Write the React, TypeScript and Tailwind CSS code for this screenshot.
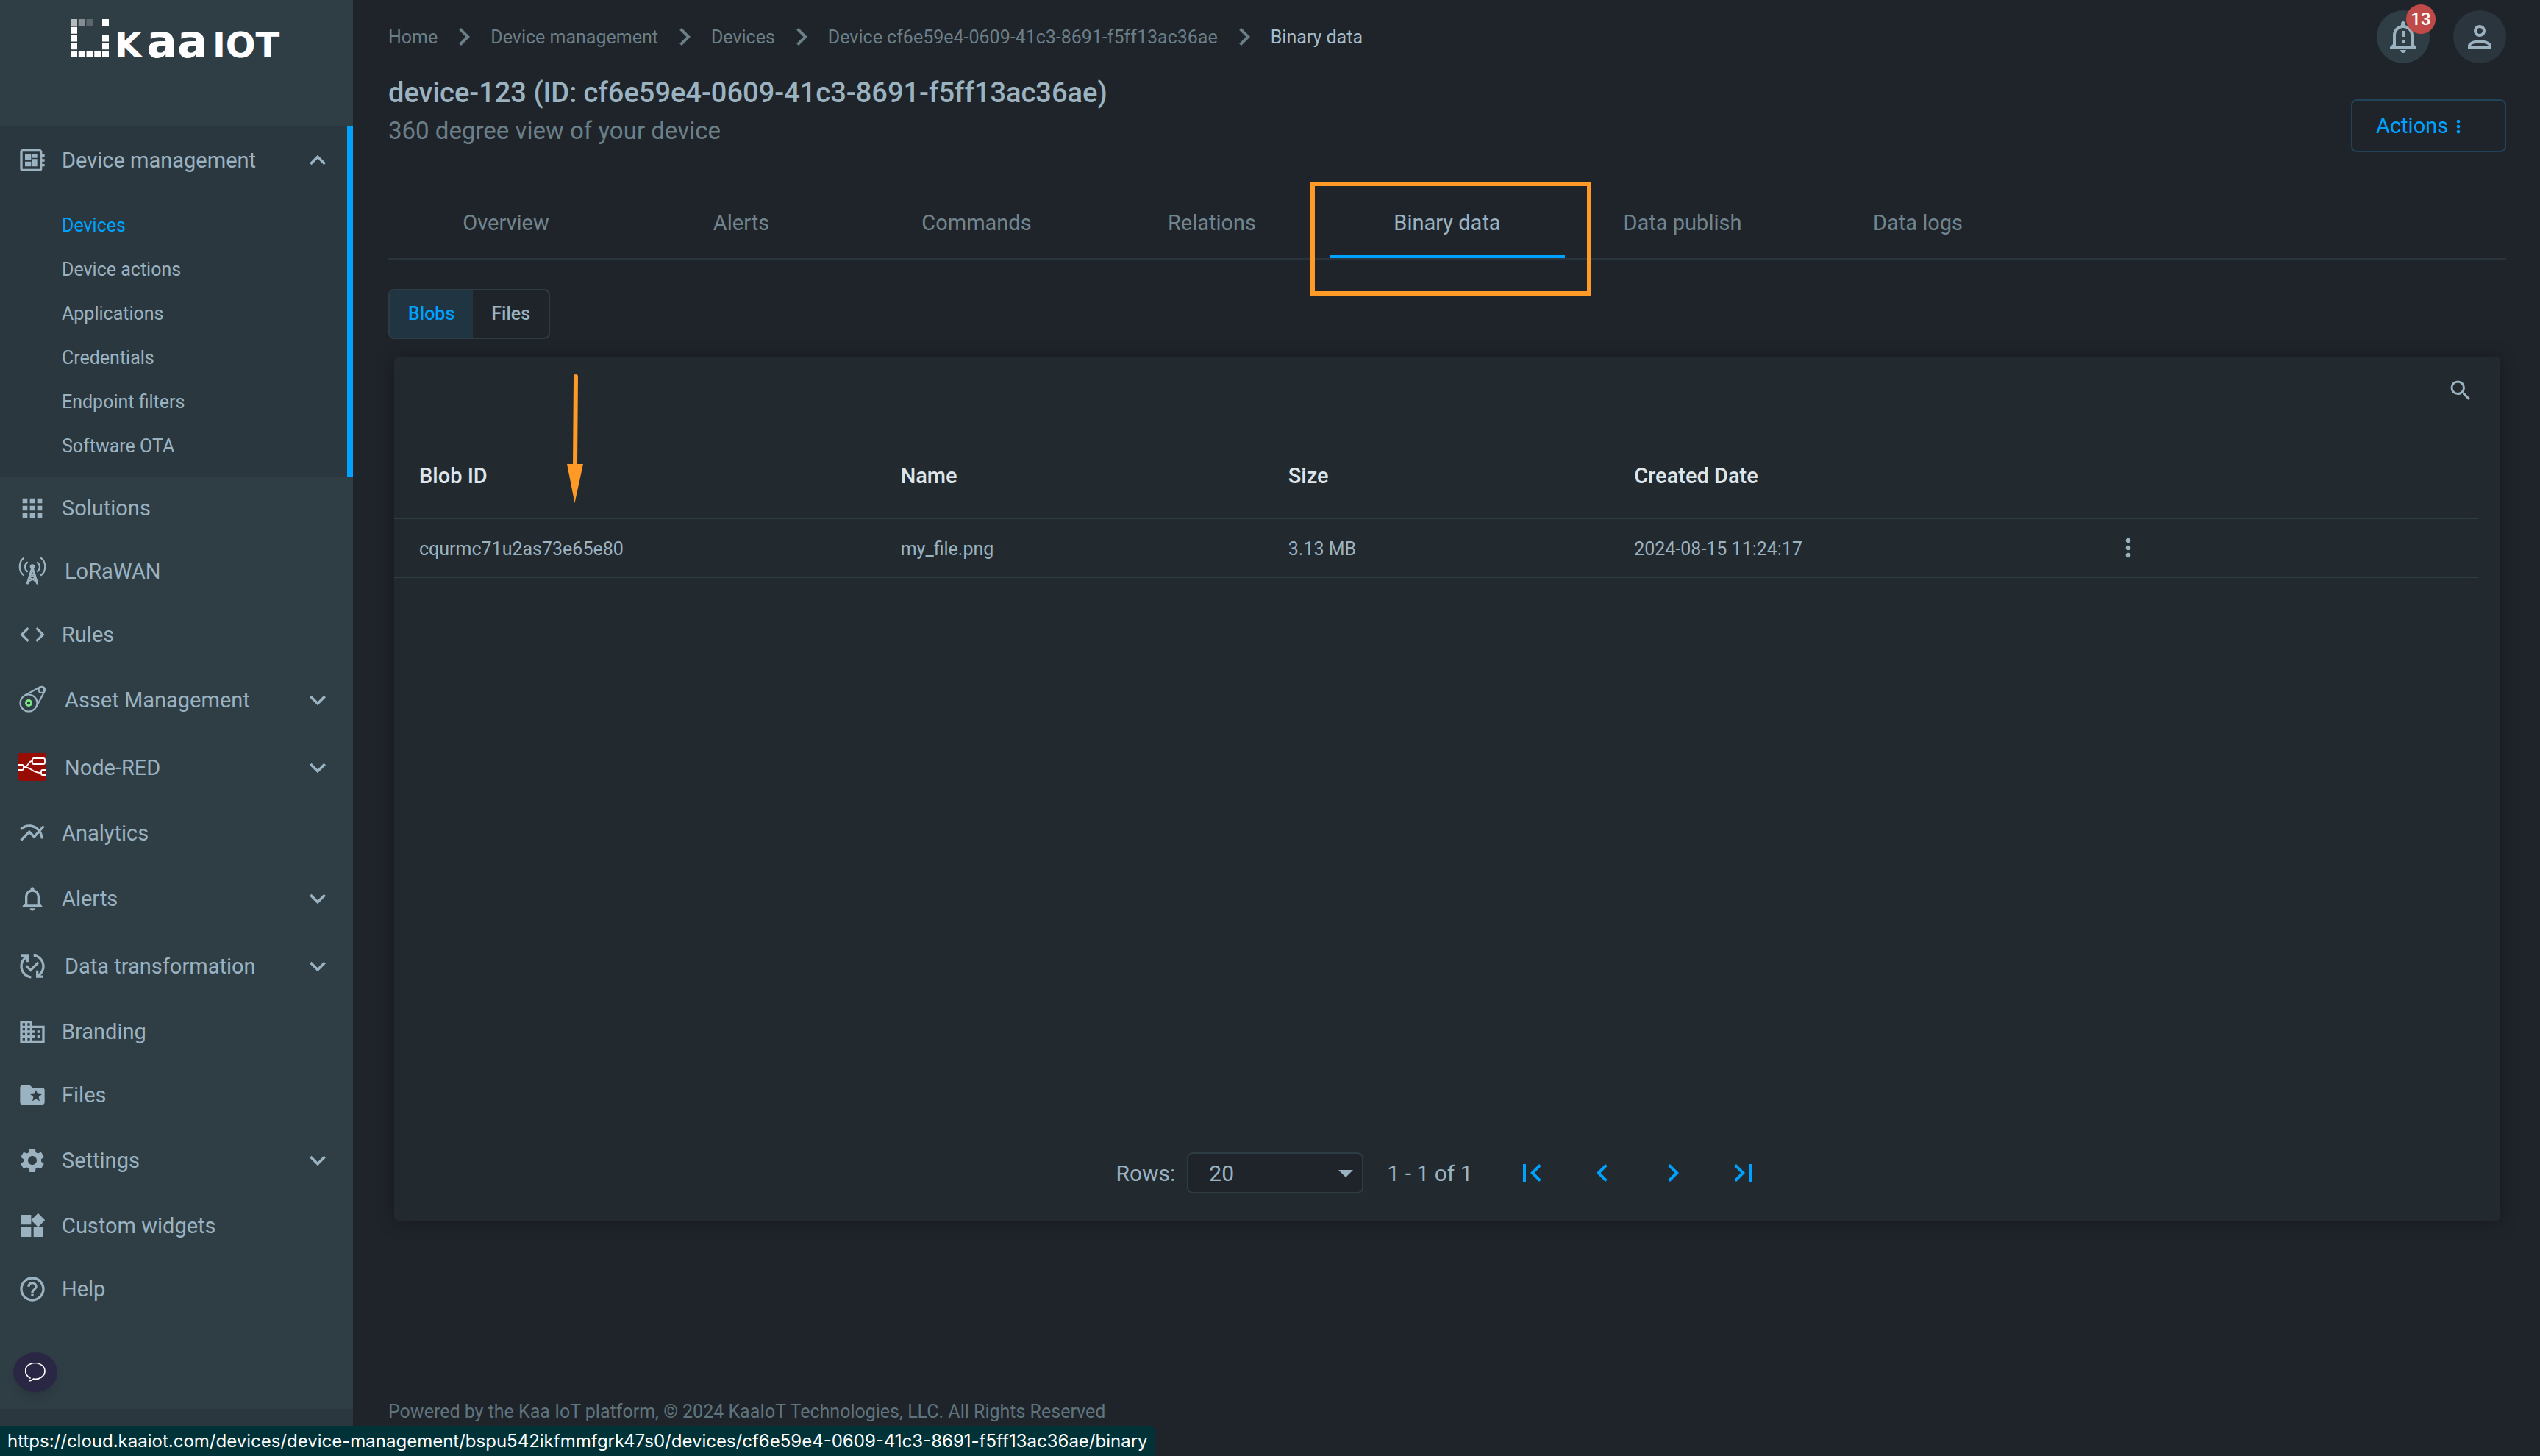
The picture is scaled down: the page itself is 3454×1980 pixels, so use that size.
import { useState } from 'react';
import type { ComponentType, ReactNode } from 'react';
import {
  MdApps,
  MdArrowDropDown,
  MdChevronLeft,
  MdChevronRight,
  MdCode,
  MdDomain,
  MdExpandLess,
  MdExpandMore,
  MdFirstPage,
  MdFolderSpecial,
  MdHelpOutline,
  MdLastPage,
  MdMoreVert,
  MdMultilineChart,
  MdNotificationsNone,
  MdOutlineDeveloperBoard,
  MdOutlineNotificationImportant,
  MdOutlinePerson,
  MdOutlinePublishedWithChanges,
  MdSearch,
  MdSettings,
  MdWidgets,
} from 'react-icons/md';

interface IconProps {
  className?: string;
}

interface NavEntry {
  label: string;
  icon: ComponentType<IconProps>;
  expandable?: boolean;
  custom?: boolean;
}

interface Blob {
  id: string;
  name: string;
  size: string;
  created: string;
}

function AntennaIcon({ className }: IconProps) {
  return (
    <svg viewBox="0 0 40 40" fill="none" stroke="currentColor" strokeWidth="2.2" strokeLinecap="round" className={className}>
      <path d="M8 2C1 7 1 20 8 25M32 2c7 5 7 18 0 23M13 8c-4 3-4 9 0 12M27 8c4 3 4 9 0 12" />
      <circle cx="20" cy="13.500" r="3.300" fill="currentColor" stroke="none" />
      <path d="M20 15l-6.500 21M20 15l6.500 21" strokeWidth="3.200" />
      <path d="M18 24l7 5M22 24l-7 5M15 34l9-6M25 34l-9-6" strokeWidth="1.800" />
    </svg>
  );
}

function BeltIcon({ className }: IconProps) {
  return (
    <svg viewBox="0 0 40 40" fill="none" stroke="currentColor" strokeWidth="2.2" className={className}>
      <circle cx="15" cy="24" r="11.500" />
      <path d="M9.500 13.800L30.300 2.300c4.500-1.800 8 1.500 6.300 5.800L25.300 29.500" />
      <circle cx="32.300" cy="6.200" r="3.800" />
      <circle cx="15" cy="24" r="3.600" stroke="#7be586" strokeWidth="2.800" />
    </svg>
  );
}

function NodeRedIcon({ className }: IconProps) {
  return (
    <svg viewBox="0 0 40 40" fill="none" className={className}>
      <rect x="1" y="0" width="38" height="38" rx="3" fill="#970d04" />
      <g stroke="#fff" strokeWidth="1.800">
        <rect x="20" y="7" width="17" height="8" rx="2" />
        <path d="M1 16h5q2 0 2 2v3q0 2-2 2H1" />
        <path d="M39 23h-5q-2 0-2 2v3q0 2 2 2h5" />
        <path d="M8 19c8 0 5-8 12-8M8 19c12 0 10 8 24 8" />
      </g>
    </svg>
  );
}

const mainNav: NavEntry[] = [
  { label: 'Solutions', icon: MdApps },
  { label: 'LoRaWAN', icon: AntennaIcon, custom: true },
  { label: 'Rules', icon: MdCode },
  { label: 'Asset Management', icon: BeltIcon, expandable: true, custom: true },
  { label: 'Node-RED', icon: NodeRedIcon, expandable: true, custom: true },
  { label: 'Analytics', icon: MdMultilineChart },
  { label: 'Alerts', icon: MdNotificationsNone, expandable: true },
  { label: 'Data transformation', icon: MdOutlinePublishedWithChanges, expandable: true, custom: true },
  { label: 'Branding', icon: MdDomain },
  { label: 'Files', icon: MdFolderSpecial },
  { label: 'Settings', icon: MdSettings, expandable: true },
  { label: 'Custom widgets', icon: MdWidgets },
  { label: 'Help', icon: MdHelpOutline },
];

const deviceNav = ['Devices', 'Device actions', 'Applications', 'Credentials', 'Endpoint filters', 'Software OTA'];

const crumbs = ['Home', 'Device management', 'Devices', 'Device cf6e59e4-0609-41c3-8691-f5ff13ac36ae'];

const tabs = ['Overview', 'Alerts', 'Commands', 'Relations', 'Binary data', 'Data publish', 'Data logs'];

const blobs: Blob[] = [
  { id: 'cqurmc71u2as73e65e80', name: 'my_file.png', size: '3.13 MB', created: '2024-08-15 11:24:17' },
];

function Logo() {
  const solid = [
    [4, 0], [0, 1], [0, 2], [4, 2], [0, 3], [4, 3], [0, 4], [1, 4], [2, 4], [3, 4], [4, 4],
  ];
  return (
    <a href="#" aria-label="KaaIoT" className="flex h-[172px] items-start pt-[26px] pl-24 text-white">
      <svg viewBox="0 0 52 52" className="size-[52px]" fill="currentColor">
        <rect x="0" y="0" width="9" height="9" opacity="0.65" />
        <rect x="10.750" y="0" width="9" height="9" opacity="0.42" />
        <rect x="21.500" y="0" width="9" height="9" opacity="0.22" />
        {solid.map(([col, row]) => (
          <rect key={`${col}-${row}`} x={col * 10.75} y={row * 10.75} width="9" height="9" />
        ))}
      </svg>
      <span className="ml-2 flex h-[52px] items-baseline gap-1.5 font-['DejaVu_Sans'] text-5xl font-bold">
        <span className="leading-[62px]">K</span>
        <span className="text-[62px] leading-[62px]">aa</span>
        <span className="leading-[62px]">IOT</span>
      </span>
    </a>
  );
}

function NavItem({ entry }: { entry: NavEntry }) {
  const Icon = entry.icon;
  return (
    <li>
      <a
        href="#"
        className={`flex items-center pr-[26px] pl-6 ${entry.expandable ? 'h-[92px]' : 'h-[86px]'} ${
          entry.custom ? 'gap-6' : 'gap-5'
        }`}
      >
        <Icon className="size-10 shrink-0" />
        <span className="grow pt-0.5">{entry.label}</span>
        {entry.expandable && <MdExpandMore className="size-11" />}
      </a>
    </li>
  );
}

function Sidebar() {
  return (
    <aside className="flex w-[480px] shrink-0 flex-col bg-[#2f3d45] text-[29px] text-[#9bb3c0]">
      <Logo />
      <nav className="grow">
        <div className="border-r-8 border-[#00a2ff] bg-[#2b373f] pb-3">
          <button type="button" className="flex h-[92px] w-full items-center gap-5 pr-[18px] pl-6 text-left">
            <MdOutlineDeveloperBoard className="size-10 shrink-0" />
            <span className="grow pt-0.5">Device management</span>
            <MdExpandLess className="size-11" />
          </button>
          <ul className="pt-3 pl-[84px] text-[25px]">
            {deviceNav.map((label) => (
              <li key={label}>
                <a
                  href="#"
                  className={`flex h-[60px] items-center pt-0.5 ${label === 'Devices' ? 'text-[#00a2ff]' : ''}`}
                >
                  {label}
                </a>
              </li>
            ))}
          </ul>
        </div>
        <ul>
          {mainNav.map((entry) => (
            <NavItem key={entry.label} entry={entry} />
          ))}
        </ul>
      </nav>
      <div className="h-16 bg-[#2b373f]" />
    </aside>
  );
}

function Breadcrumbs() {
  return (
    <nav aria-label="Breadcrumb">
      <ol className="flex items-center gap-3 text-[25px] text-[#6b7f88]">
        {crumbs.map((crumb) => (
          <li key={crumb} className="flex items-center gap-3">
            <a href="#" className="pt-0.5">
              {crumb}
            </a>
            <MdChevronRight className="size-12" />
          </li>
        ))}
        <li className="pt-0.5 text-[#a5bdc9]">Binary data</li>
      </ol>
    </nav>
  );
}

function TopBar() {
  return (
    <div className="flex h-[72px] items-center justify-between">
      <Breadcrumbs />
      <div className="flex gap-8 text-[#9bb3c0]">
        <button
          type="button"
          aria-label="Notifications"
          className="relative flex size-[72px] items-center justify-center rounded-full bg-[#2f3d45]"
        >
          <MdOutlineNotificationImportant className="size-12" />
          <span className="absolute -top-2 -right-2 flex size-10 items-center justify-center rounded-full bg-[#c04a47] text-2xl font-medium text-white">
            13
          </span>
        </button>
        <button
          type="button"
          aria-label="Account"
          className="flex size-[72px] items-center justify-center rounded-full bg-[#2b353e]"
        >
          <MdOutlinePerson className="size-12" />
        </button>
      </div>
    </div>
  );
}

function Tabs({ active, onSelect }: { active: string; onSelect: (tab: string) => void }) {
  return (
    <ul className="mt-12 flex border-b-2 border-[#2a343c] text-[29px]">
      {tabs.map((tab) => (
        <li key={tab} className="relative w-80">
          <button
            type="button"
            onClick={() => onSelect(tab)}
            className={`h-24 w-full border-b-4 pt-1.5 ${
              tab === active ? 'border-[#00a2ff] text-[#9bb3c0]' : 'border-transparent text-[#71858f]'
            }`}
          >
            {tab}
          </button>
          {tab === 'Binary data' && (
            <div className="pointer-events-none absolute -top-2 -right-9 -bottom-[51px] -left-[26px] border-6 border-[#ff9a26]" />
          )}
        </li>
      ))}
    </ul>
  );
}

function PageButton({ label, children }: { label: string; children: ReactNode }) {
  return (
    <button type="button" aria-label={label} className="flex w-24 justify-center text-[#00a2ff]">
      {children}
    </button>
  );
}

function Pagination() {
  const [rows, setRows] = useState('20');

  return (
    <div className="flex items-center justify-center pb-[37px] text-[30px] text-[#9bb3c0]">
      <label htmlFor="rows" className="mr-4">
        Rows:
      </label>
      <div className="relative">
        <select
          id="rows"
          value={rows}
          onChange={(e) => setRows(e.target.value)}
          className="h-14 w-60 appearance-none rounded-lg border-2 border-[#2e3c44] bg-[#1f242a] pl-7"
        >
          <option value="10">10</option>
          <option value="20">20</option>
          <option value="50">50</option>
        </select>
        <MdArrowDropDown className="pointer-events-none absolute top-1 right-0 size-12" />
      </div>
      <span className="mx-8">1 - 1 of 1</span>
      <PageButton label="First page">
        <MdFirstPage className="size-12" />
      </PageButton>
      <PageButton label="Previous page">
        <MdChevronLeft className="size-12" />
      </PageButton>
      <PageButton label="Next page">
        <MdChevronRight className="size-12" />
      </PageButton>
      <PageButton label="Last page">
        <MdLastPage className="size-12" />
      </PageButton>
    </div>
  );
}

function BlobTable() {
  return (
    <table className="w-full table-fixed text-left">
      <colgroup>
        <col className="w-[23.1%]" />
        <col className="w-[18.6%]" />
        <col className="w-[16.6%]" />
        <col className="w-[23.2%]" />
        <col />
      </colgroup>
      <thead className="text-[29px] text-[#dde5ea]">
        <tr className="h-[118px] border-b-2 border-[#2e3d45]">
          <th className="pt-1 pl-[34px] font-medium">Blob ID</th>
          <th className="pt-1 pl-[34px] font-medium">Name</th>
          <th className="pt-1 pl-[34px] font-medium">Size</th>
          <th className="pt-1 pl-[34px] font-medium">Created Date</th>
          <th aria-label="Actions" />
        </tr>
      </thead>
      <tbody className="text-[25px] text-[#9bb3c0]">
        {blobs.map((blob) => (
          <tr key={blob.id} className="h-20 border-b-2 border-[#2e3d45]">
            <td className="pt-1 pl-[34px]">{blob.id}</td>
            <td className="pt-1 pl-[34px]">{blob.name}</td>
            <td className="pt-1 pl-[34px]">{blob.size}</td>
            <td className="pt-1 pl-[34px]">{blob.created}</td>
            <td className="pl-7">
              <button type="button" aria-label="Blob actions" className="block">
                <MdMoreVert className="size-10" />
              </button>
            </td>
          </tr>
        ))}
      </tbody>
    </table>
  );
}

export default function App() {
  const [tab, setTab] = useState('Binary data');

  return (
    <div className="flex min-h-screen bg-[#1f242a] font-[Roboto,sans-serif]">
      <Sidebar />
      <main className="flex grow flex-col pt-3.5 pr-[46px] pl-12">
        <TopBar />
        <header className="mt-4 flex items-start justify-between">
          <div>
            <h1 className="text-[38px] leading-[48px] font-medium text-[#9bb3c0]">
              device-123 (ID: cf6e59e4-0609-41c3-8691-f5ff13ac36ae)
            </h1>
            <p className="mt-1 text-[33px] leading-[48px] text-[#6b7f88]">360 degree view of your device</p>
          </div>
          <button
            type="button"
            className="mt-[33px] flex h-[72px] w-[211px] items-center rounded-lg border-2 border-[#21445b] pt-0.5 pl-8 text-[29px] text-[#00a2ff]"
          >
            Actions
            <MdMoreVert className="size-7" />
          </button>
        </header>

        <Tabs active={tab} onSelect={setTab} />

        <div className="mt-10 flex h-[68px] self-start overflow-hidden rounded-lg border-2 border-[#2e3c44] text-[25px] font-medium">
          <button type="button" className="bg-[#203442] px-[25px] text-[#00a2ff]">
            Blobs
          </button>
          <button type="button" className="px-[25px] text-[#9bb3c0]">
            Files
          </button>
        </div>

        <section className="relative mx-2 mt-6 flex grow flex-col rounded-md bg-[#22292f] shadow-[0_2px_24px_rgba(0,0,0,0.3)]">
          <div className="flex h-[102px] items-start justify-end pt-7 pr-9">
            <button type="button" aria-label="Search" className="text-[#9bb3c0]">
              <MdSearch className="size-9" />
            </button>
          </div>
          <div className="grow pr-[30px]">
            <BlobTable />
          </div>
          <Pagination />
          <svg
            viewBox="0 0 22 175"
            className="pointer-events-none absolute top-6 left-[235px] h-[175px] w-[22px] text-[#ff9a26]"
          >
            <path d="M12 3L11 124" stroke="currentColor" strokeWidth="6" strokeLinecap="round" />
            <path d="M0 122h22L10.500 175z" fill="currentColor" />
          </svg>
        </section>

        <footer className="mt-60 pt-0.5 pb-[42px] text-[25px] leading-9 text-[#5f747d]">
          Powered by the Kaa IoT platform, © 2024 KaaIoT Technologies, LLC. All Rights Reserved
        </footer>
      </main>

      <button
        type="button"
        aria-label="Open chat"
        className="fixed bottom-[87px] left-[18px] flex h-[54px] w-[60px] items-center justify-center rounded-[50%] bg-[#2a2745] text-white shadow-lg"
      >
        <svg viewBox="0 0 28 26" fill="none" stroke="currentColor" strokeWidth="1.700" strokeLinecap="round" className="h-[26px] w-7">
          <path d="M7 21C-2 16-1 5 7 2c9-4 20 1 20 9.500 0 7-8 12-15.500 10.500-1.500 1.500-3 2.500-5 2.700" />
        </svg>
      </button>
      <div className="fixed bottom-0 left-0 rounded-tr-lg bg-[#003238] px-2.5 font-[Inter,sans-serif] text-2xl leading-[41px] whitespace-nowrap text-white">
        https://cloud.kaaiot.com/devices/device-management/bspu542ikfmmfgrk47s0/devices/cf6e59e4-0609-41c3-8691-f5ff13ac36ae/binary
      </div>
    </div>
  );
}
